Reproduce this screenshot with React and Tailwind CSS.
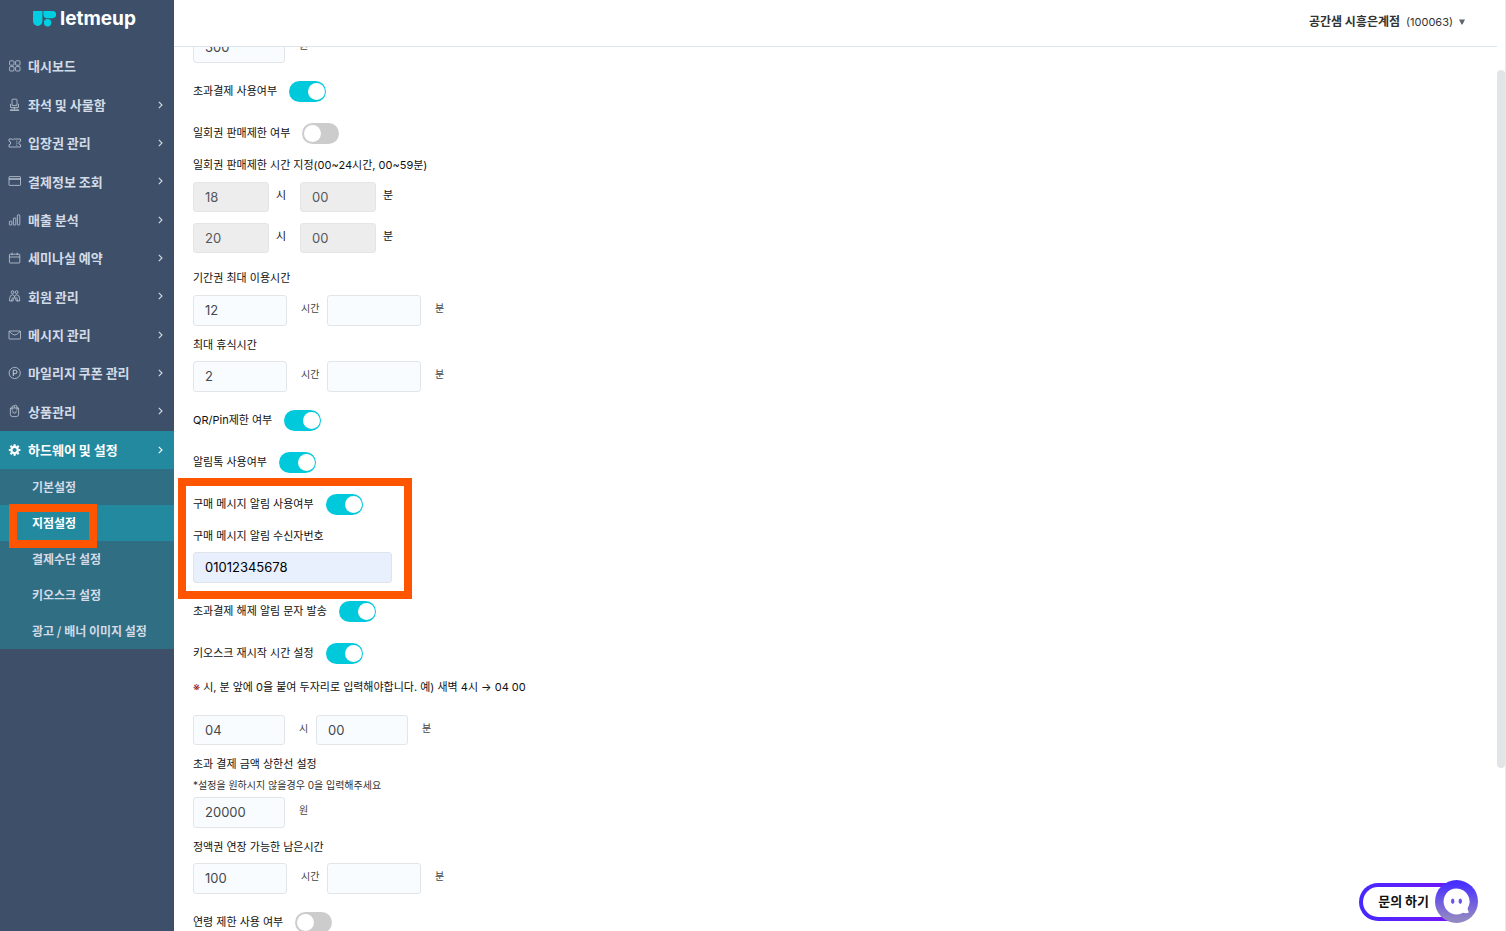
import React, { useState } from 'react';
import clsx from 'clsx';

const SvgIcon = ({ children }) => (
    <svg viewBox="0 0 12 12" className="size-3 shrink-0 overflow-visible" fill="none" stroke="currentColor" strokeWidth="0.7">
        {children}
    </svg>
);

const icons = {
    dashboard: (
        <SvgIcon>
            <rect x="0.6" y="0.8" width="4.4" height="4.4" rx="0.8" />
            <rect x="6.6" y="0.8" width="4.4" height="4.4" rx="0.8" />
            <rect x="0.6" y="6.6" width="4.4" height="4.4" rx="0.8" />
            <rect x="6.6" y="6.6" width="4.4" height="4.4" rx="0.8" />
        </SvgIcon>
    ),
    seat: (
        <SvgIcon>
            <path d="M3 6.400V1Q3 .2 3.800.2h3.400q.8 0 .8.8v5.400zM1.500 4.800v3.600h8V4.800M5.500 8.400v1.800M1.200 11.500l.8-1.300h7l.8 1.300z" />
        </SvgIcon>
    ),
    ticket: (
        <SvgIcon>
            <path d="M0 2h3.200l.6.7.6-.7H11.500v2.300a1.700 1.700 0 0 0 0 3.400V10H0V7.700a1.700 1.700 0 0 0 0-3.400z" />
            <path d="M7.800 3.600v1.200M7.800 5.600v1.200M7.800 7.600v1.200" />
        </SvgIcon>
    ),
    card: (
        <SvgIcon>
            <rect x="0" y="1.600" width="11.500" height="8.800" rx="0.6" />
            <path d="M0 4h11.500" strokeWidth="1.200" />
        </SvgIcon>
    ),
    chart: (
        <SvgIcon>
            <rect x="0.400" y="7.200" width="2.400" height="3.800" rx="0.4" />
            <rect x="4.400" y="4" width="2.400" height="7" rx="0.4" />
            <rect x="8.400" y="0.800" width="2.400" height="10.200" rx="0.6" />
        </SvgIcon>
    ),
    calendar: (
        <SvgIcon>
            <rect x="0.400" y="2.200" width="10.400" height="8.800" rx="0.8" />
            <path d="M.4 5h10.400M3 .6v2.600M8.200.6v2.600" />
        </SvgIcon>
    ),
    members: (
        <SvgIcon>
            <circle cx="3.600" cy="2.200" r="1.400" />
            <circle cx="7.600" cy="2.200" r="1.400" />
            <path d="M.6 11V8.400Q1 4.800 3.400 4.800 4.800 4.800 5.600 6.400 6.400 4.800 7.800 4.800 10.200 4.800 10.600 8.400V11H7.400L5.600 6.400 3.800 11zM3.600 7.400 2.400 11M7.600 7.400 8.800 11" />
        </SvgIcon>
    ),
    mail: (
        <SvgIcon>
            <rect x="0" y="2" width="11.500" height="8" rx="0.5" />
            <path d="M.2 2.200 2.200 4.200Q5.700 7.600 9.300 4.200L11.300 2.200" />
        </SvgIcon>
    ),
    mileage: (
        <SvgIcon>
            <circle cx="5.700" cy="6" r="5.600" />
            <path d="M4.300 9V3.200h1.900a1.700 1.700 0 0 1 0 3.500H4.300" strokeWidth="0.9" />
        </SvgIcon>
    ),
    product: (
        <SvgIcon>
            <path d="M1.400 3h8.200v6.400q0 2.200-2.200 2.200H3.600q-2.200 0-2.200-2.200z" />
            <path d="M3 5V2.400Q3 .8 4.400.8 5.800.8 5.800 2.600M5.200 1.200Q5.600.2 6.600.2 8 .2 8 2v3M3.600 5.600Q3.600 8.200 5.500 8.200T7.400 5.600" />
        </SvgIcon>
    ),
    gear: (
        <SvgIcon>
            <circle cx="5.600" cy="6" r="3.200" strokeWidth="2.200" />
            <path d="M5.600.2v2M5.600 9.800v2M-.2 6h2M9.400 6h2M1.500 1.900l1.400 1.400M8.300 8.700l1.400 1.400M1.500 10.100l1.400-1.400M8.300 3.300l1.400-1.400" strokeWidth="2.200" />
        </SvgIcon>
    ),
};

const menus = [
    { icon: 'dashboard', name: '대시보드', single: true },
    { icon: 'seat', name: '좌석 및 사물함' },
    { icon: 'ticket', name: '입장권 관리' },
    { icon: 'card', name: '결제정보 조회' },
    { icon: 'chart', name: '매출 분석' },
    { icon: 'calendar', name: '세미나실 예약' },
    { icon: 'members', name: '회원 관리' },
    { icon: 'mail', name: '메시지 관리' },
    { icon: 'mileage', name: '마일리지 쿠폰 관리' },
    { icon: 'product', name: '상품관리' },
    { icon: 'gear', name: '하드웨어 및 설정', active: true },
];

const subMenus = ['기본설정', '지점설정', '결제수단 설정', '키오스크 설정', '광고 / 배너 이미지 설정'];

const Sidebar = () => (
    <aside className="w-[174px] shrink-0 bg-[#3e5069] font-['Noto_Sans_CJK_KR',sans-serif] text-[#d3dbe6]">
        <a href="#" className="flex h-[47px] items-start gap-1 pl-8 pt-[7px] text-white">
            <svg viewBox="0 0 24 16" className="mt-1 h-4 w-6" fill="#00cfe3">
                <path d="M1.800 0H10.400v10.200a4.700 4.700 0 0 1-9.400 0V.8q0-.8.8-.8z" />
                <path d="M11.400 0h9.200a3.600 3.600 0 0 1 0 7.200h-5.200a4 4 0 0 1-4-4z" />
                <circle cx="15.600" cy="11.800" r="3.700" />
            </svg>
            <span className="font-['Inter',sans-serif] text-[19px] leading-6 font-bold">letmeup</span>
        </a>
        <nav>
            <ul className="grid h-[422px] auto-rows-fr">
                {menus.map((menu) => (
                    <li key={menu.name} className={clsx(menu.active && 'bg-[#23899f] text-white')}>
                        <a href="#" className="flex h-full items-center gap-[7px] pr-[11px] pl-[9px] text-[13px] font-bold">
                            {icons[menu.icon]}
                            <span className="flex-1 whitespace-nowrap">{menu.name}</span>
                            {!menu.single && (
                                <svg viewBox="0 0 5 8" className="h-2 w-[5px]" fill="none" stroke="currentColor" strokeWidth="1.1">
                                    <path d="M.8.8 4 4 .8 7.2" />
                                </svg>
                            )}
                        </a>
                    </li>
                ))}
            </ul>
            <ul className="bg-[#306e84]">
                {subMenus.map((name, idx) => (
                    <li key={name} className={clsx('relative', idx === 1 && 'bg-[#23899f] text-white')}>
                        <a href="#" className="flex h-9 items-center pb-px pl-8 text-[12px] font-bold">{name}</a>
                        {idx === 1 && <span className="pointer-events-none absolute -top-px left-[9px] z-10 h-11 w-[88px] border-8 border-[#ff5500]" />}
                    </li>
                ))}
            </ul>
        </nav>
    </aside>
);

const Toggle = ({ id, label, on = false }) => {
    const [checked, setChecked] = useState(on);
    return (
        <div className="flex h-[42px] items-start gap-3 pt-2.5">
            <label htmlFor={id} className="leading-5">{label}</label>
            <input
                id={id}
                type="checkbox"
                role="switch"
                checked={checked}
                onChange={(e) => setChecked(e.target.checked)}
                className="h-[21px] w-[37px] appearance-none rounded-full bg-[#cccccc] before:m-0.5 before:block before:size-[17px] before:rounded-full before:bg-white checked:bg-[#00c9dc] checked:before:translate-x-[17px]"
            />
        </div>
    );
};

const Title = ({ htmlFor, className = 'mb-1.5', children }) => (
    <label htmlFor={htmlFor} className={clsx('block leading-5', className)}>{children}</label>
);

const TextBox = ({ id, label, value = '', className, disabled }) => (
    <input
        id={id}
        type="text"
        aria-label={label}
        defaultValue={value}
        disabled={disabled}
        className={clsx(
            'rounded-[3px] border border-[#e3e6e8] px-[11px] pb-px text-[13px] outline-none',
            disabled ? 'bg-[#ededed] text-[#55585c]' : 'bg-[#f8fcff] text-[#45484c]',
            className
        )}
    />
);

const Unit = ({ className, children }) => (
    <span className={clsx('mt-1 pl-3.5 text-[10px] leading-[18px] text-[#444]', className)}>{children}</span>
);

// hour / minute pair used by the period, break and extension rows
const HourMinute = ({ id, label, hour }) => (
    <div className="flex items-start">
        <TextBox id={id} value={hour} className="h-[31px] w-[94px]" />
        <Unit className="w-10">시간</Unit>
        <TextBox label={`${label} 분`} className="h-[31px] w-[94px]" />
        <Unit>분</Unit>
    </div>
);

const LimitRow = ({ id, label, hour, minute }) => (
    <div className="flex items-start">
        <TextBox id={id} label={`${label} 시`} value={hour} disabled className="h-[30px] w-[76px]" />
        <span className="mt-1 w-[31px] pl-[7px] leading-[18px]">시</span>
        <TextBox label={`${label} 분`} value={minute} disabled className="h-[30px] w-[76px]" />
        <span className="mt-1 pl-[7px] leading-[18px]">분</span>
    </div>
);

const BranchForm = () => (
    <form className="-mt-[15px] pl-[19px] text-[11px] text-[#111]" onSubmit={(e) => e.preventDefault()}>
        <div className="mb-2 flex items-start">
            <TextBox label="초과결제 금액" value="300" className="h-[31px] w-[92px]" />
            <Unit>원</Unit>
        </div>

        <Toggle id="overPay" label="초과결제 사용여부" on />
        <Toggle id="oneTimeLimit" label="일회권 판매제한 여부" />

        <Title htmlFor="limitStart" className="mb-[7px]">일회권 판매제한 시간 지정(00~24시간, 00~59분)</Title>
        <div className="mb-[15px] flex flex-col gap-[11px]">
            <LimitRow id="limitStart" label="시작" hour="18" minute="00" />
            <LimitRow id="limitEnd" label="종료" hour="20" minute="00" />
        </div>

        <Title htmlFor="maxUse" className="mb-[7px]">기간권 최대 이용시간</Title>
        <HourMinute id="maxUse" label="이용시간" hour="12" />
        <Title htmlFor="maxRest" className="mt-[9px] mb-1.5">최대 휴식시간</Title>
        <HourMinute id="maxRest" label="휴식시간" hour="2" />

        <div className="mt-2">
            <Toggle id="qrPin" label="QR/Pin제한 여부" on />
            <Toggle id="alimTalk" label="알림톡 사용여부" on />
        </div>

        {/* purchase message alarm */}
        <div className="relative pb-2">
            <Toggle id="buyAlarm" label="구매 메시지 알림 사용여부" on />
            <Title htmlFor="receiver">구매 메시지 알림 수신자번호</Title>
            <input
                id="receiver"
                type="tel"
                defaultValue="01012345678"
                className="block h-[31px] w-[199px] rounded-[3px] border border-[#dfe4ea] bg-[#e8f0fe] px-[11px] pb-px text-[13px] text-black outline-none"
            />
            <span className="pointer-events-none absolute -top-1.5 -bottom-2 -left-[15px] w-[234px] border-8 border-[#ff5500]" />
        </div>

        <Toggle id="overPayRelease" label="초과결제 해제 알림 문자 발송" on />
        <Toggle id="kioskRestart" label="키오스크 재시작 시간 설정" on />

        <p className="mt-0.5 mb-[18px] leading-5">
            <span className="text-[#8b2020]">※</span> 시, 분 앞에 0을 붙여 두자리로 입력해야합니다. 예) 새벽 4시 → 04 00
        </p>
        <div className="flex items-start">
            <TextBox label="재시작 시" value="04" className="h-[30px] w-[92px]" />
            <Unit className="w-[31px]">시</Unit>
            <TextBox label="재시작 분" value="00" className="h-[30px] w-[92px]" />
            <Unit>분</Unit>
        </div>

        <Title htmlFor="overPayMax" className="mt-[9px] mb-0.5">초과 결제 금액 상한선 설정</Title>
        <p className="mb-[3px] text-[10px] leading-[18px] text-[#333]">*설정을 원하시지 않을경우 0을 입력해주세요</p>
        <div className="flex items-start">
            <TextBox id="overPayMax" value="20000" className="h-[31px] w-[92px]" />
            <Unit>원</Unit>
        </div>

        <Title htmlFor="extend" className="mt-[9px] mb-1.5">정액권 연장 가능한 남은시간</Title>
        <HourMinute id="extend" label="남은시간" hour="100" />

        <div className="mt-2">
            <Toggle id="ageLimit" label="연령 제한 사용 여부" />
        </div>
    </form>
);

const ChatButton = () => (
    <button type="button" className="fixed right-7 bottom-2 flex items-center font-['Noto_Sans_CJK_KR',sans-serif]">
        <span className="-mr-8 flex h-[38px] rounded-full bg-linear-to-r from-[#4527ff] to-[#7a0cf5] p-1">
            <span className="flex items-center rounded-full bg-white pr-[34px] pb-px pl-[15px] text-[13px] font-bold text-[#111]">문의 하기</span>
        </span>
        <svg viewBox="0 0 43 43" className="relative size-[43px]">
            <defs>
                <linearGradient id="chatBg" x1="0" y1="0" x2="0" y2="1">
                    <stop offset="0.1" stopColor="#4a30ff" />
                    <stop offset="0.9" stopColor="#9186c4" />
                </linearGradient>
            </defs>
            <circle cx="21.5" cy="21.5" r="21.5" fill="url(#chatBg)" />
            <path d="M21.500 8.500a13 13 0 1 0 6.500 24.300q3 .8 6-.3-1.600-1.800-1.300-4.400A13 13 0 0 0 21.500 8.500z" fill="#fff" />
            <ellipse cx="17.700" cy="21.300" rx="1.700" ry="2.800" fill="#6a55ee" />
            <ellipse cx="25.300" cy="21.300" rx="1.700" ry="2.800" fill="#6a55ee" />
        </svg>
    </button>
);

const App = () => (
    <div className="flex h-screen overflow-hidden bg-white font-['Inter','Noto_Sans_CJK_KR',sans-serif]">
        <Sidebar />
        <div className="flex min-w-0 flex-1 flex-col">
            <header className="flex h-[47px] shrink-0 items-center justify-end border-b border-[#dce4ec] pr-8 pb-0.5">
                <button type="button" className="flex items-center gap-1.5 text-[#333]">
                    <span className="text-[12px] font-bold">공간샘 시흥은계점</span>
                    <span className="text-[11px]">(100063)</span>
                    <svg viewBox="0 0 6 6" className="size-1.5" fill="#5f6670">
                        <path d="M0 .5h6L3.500 5.500h-1z" />
                    </svg>
                </button>
            </header>
            <main className="min-h-0 flex-1 overflow-hidden">
                <BranchForm />
            </main>
        </div>
        <div className="flex w-[9px] shrink-0 flex-col border-r border-[#e6e8ea]">
            <div className="mt-[70px] h-3/4 rounded-full bg-[#e3e4e6]" />
        </div>
        <ChatButton />
    </div>
);

export default App;
